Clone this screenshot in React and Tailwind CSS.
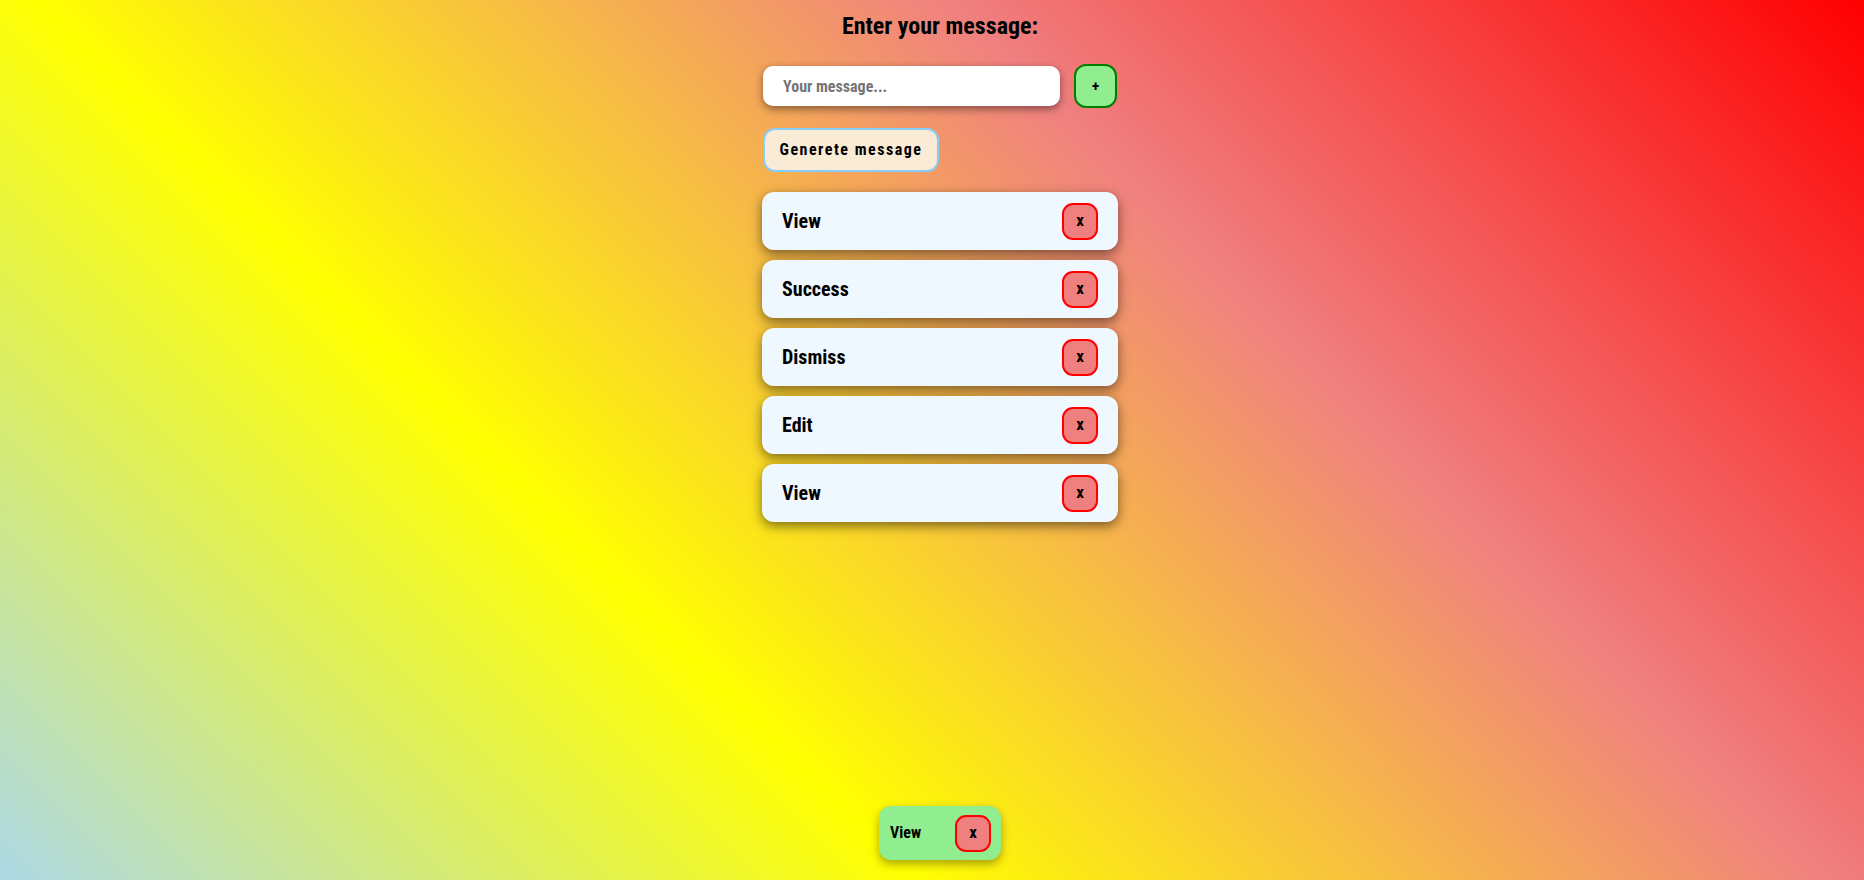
import React, { useState } from 'react';

const FONT = "font-[Roboto,'DejaVu_Sans',sans-serif] font-stretch-condensed";

const initialMessages = ['View', 'Success', 'Dismiss', 'Edit', 'View'];

const CloseButton = ({ onClick }) => (
  <button
    onClick={onClick}
    className="w-[36px] h-[37px] rounded-[11px] bg-[#f08080] border-2 border-[#ff0000] text-[17px] font-bold text-black flex items-center justify-center"
  >
    x
  </button>
);

const App = () => {
  const [messages, setMessages] = useState(initialMessages);
  const [text, setText] = useState('');

  const addMessage = () => {
    if (!text.trim()) return;
    setMessages([...messages, text]);
    setText('');
  };

  return (
    <div className={`${FONT} min-h-[880px] w-full bg-[linear-gradient(45deg,#add8e6,#ffff00,#f08080,#ff0000)] flex flex-col items-center pl-[16px] relative`}>
      <h1 className="mt-[12px] text-[24px] font-bold text-black leading-[28px]">Enter your message:</h1>

      <div className="w-[356px] mt-[24px] flex flex-col">
        <div className="flex items-center">
          <input
            type="text"
            placeholder="Your message..."
            value={text}
            onChange={(e) => setText(e.target.value)}
            className="w-[297px] h-[40px] ml-[1px] rounded-[10px] bg-white px-[20px] text-[16px] font-bold text-black placeholder:text-[#757575] outline-none shadow-[0_3px_8px_rgba(0,0,0,0.45)]"
          />
          <button
            onClick={addMessage}
            className="ml-[14px] w-[43px] h-[44px] rounded-[12px] bg-[#90ee90] border-2 border-[#008000] text-[15px] font-bold text-black"
          >
            +
          </button>
        </div>

        <button className="mt-[20px] ml-[1px] w-[176px] h-[44px] rounded-[12px] bg-[#faebd7] border-2 border-[#87cefa] text-[16px] font-bold tracking-[1.5px] text-black">
          Generete message
        </button>

        <div className="mt-[20px] flex flex-col gap-[10px]">
          {messages.map((m, i) => (
            <div
              key={i}
              className="h-[58px] rounded-[12px] bg-[#f0f8ff] pl-[20px] pr-[20px] flex items-center justify-between shadow-[0_4px_12px_rgba(0,0,0,0.5)]"
            >
              <span className="text-[20px] font-bold text-black">{m}</span>
              <CloseButton onClick={() => setMessages(messages.filter((_, j) => j !== i))} />
            </div>
          ))}
        </div>
      </div>

      <div className="absolute left-[879px] top-[806px] w-[122px] h-[54px] rounded-[12px] bg-[#90ee90] pl-[11px] pr-[10px] flex items-center justify-between shadow-[0_4px_10px_rgba(0,0,0,0.35)]">
        <span className="text-[16px] font-bold text-black">View</span>
        <CloseButton />
      </div>
    </div>
  );
};

export default App;
